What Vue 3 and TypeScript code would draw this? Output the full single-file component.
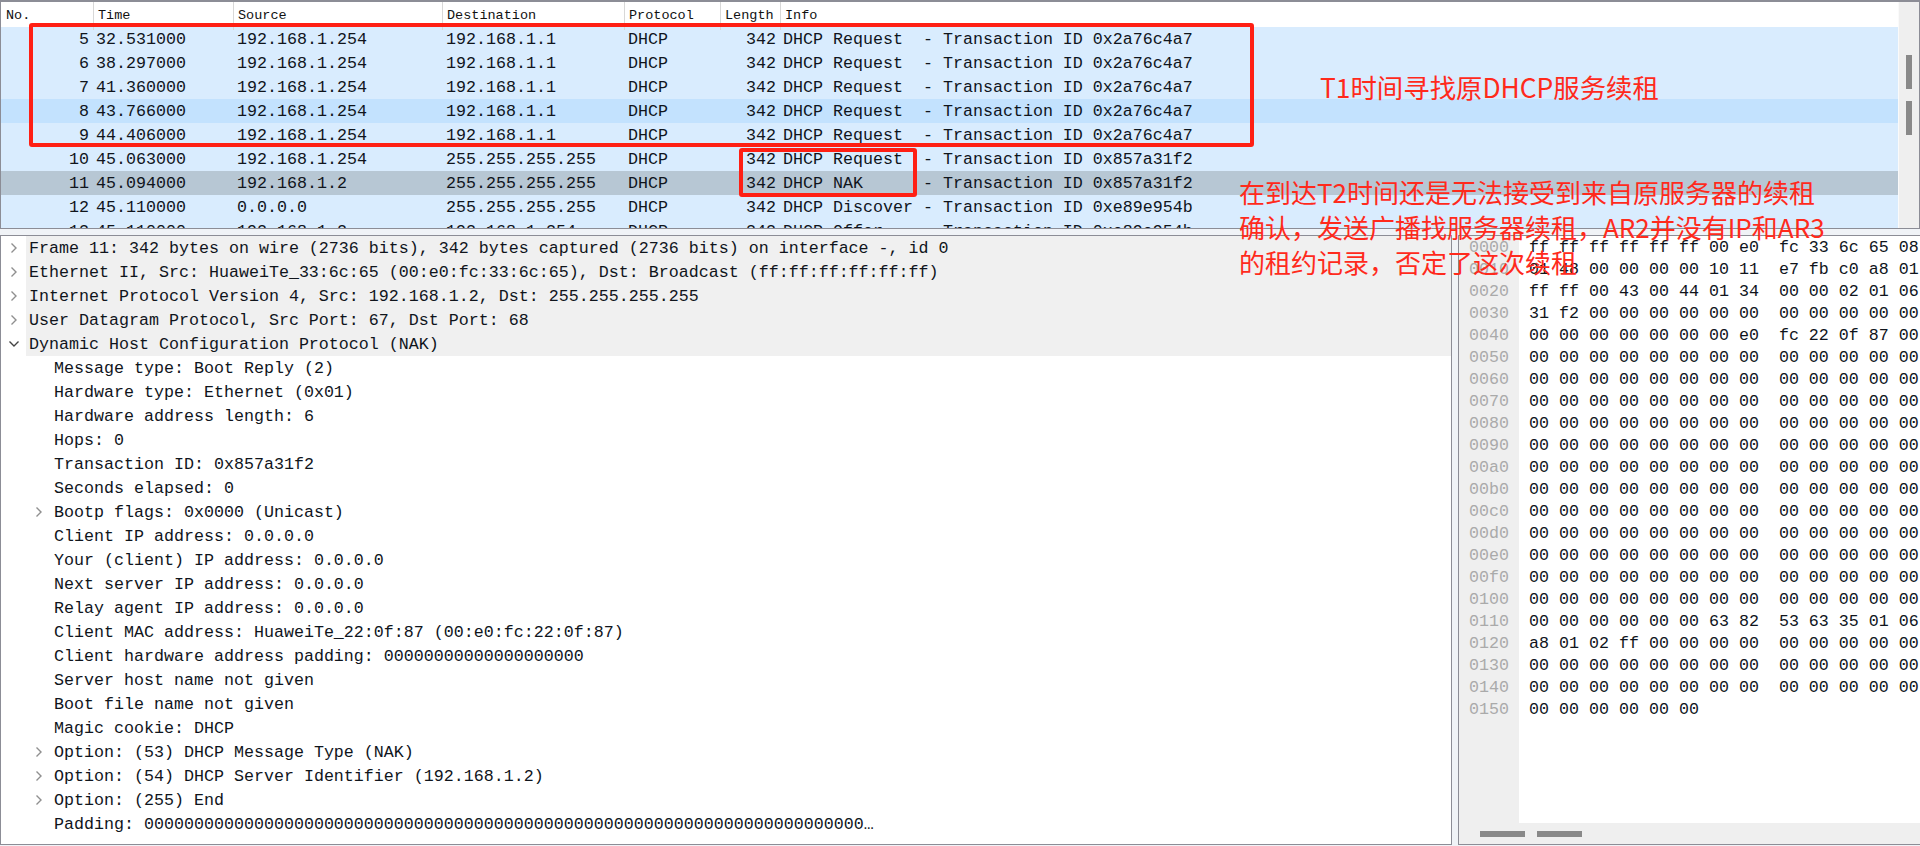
<script setup lang="ts">
interface Packet { no: number; time: string; src: string; dst: string; info: string; tone?: string }
interface Detail { text: string; level: number; arrow?: 'right' | 'down'; hl?: boolean }

const heads = ['No.', 'Time', 'Source', 'Destination', 'Protocol', 'Length', 'Info']
const a = '192.168.1.254'
const b = '192.168.1.1'
const bc = '255.255.255.255'
const packets: Packet[] = [
  { no: 5, time: '32.531000', src: a, dst: b, info: 'DHCP Request  - Transaction ID 0x2a76c4a7' },
  { no: 6, time: '38.297000', src: a, dst: b, info: 'DHCP Request  - Transaction ID 0x2a76c4a7' },
  { no: 7, time: '41.360000', src: a, dst: b, info: 'DHCP Request  - Transaction ID 0x2a76c4a7' },
  { no: 8, time: '43.766000', src: a, dst: b, info: 'DHCP Request  - Transaction ID 0x2a76c4a7', tone: 'related' },
  { no: 9, time: '44.406000', src: a, dst: b, info: 'DHCP Request  - Transaction ID 0x2a76c4a7' },
  { no: 10, time: '45.063000', src: a, dst: bc, info: 'DHCP Request  - Transaction ID 0x857a31f2' },
  { no: 11, time: '45.094000', src: '192.168.1.2', dst: bc, info: 'DHCP NAK      - Transaction ID 0x857a31f2', tone: 'selected' },
  { no: 12, time: '45.110000', src: '0.0.0.0', dst: bc, info: 'DHCP Discover - Transaction ID 0xe89e954b' },
  { no: 13, time: '45.110000', src: '192.168.1.2', dst: a, info: 'DHCP Offer    - Transaction ID 0xe89e954b' },
]
const details: Detail[] = [
  { text: 'Frame 11: 342 bytes on wire (2736 bits), 342 bytes captured (2736 bits) on interface -, id 0', level: 0, arrow: 'right', hl: true },
  { text: 'Ethernet II, Src: HuaweiTe_33:6c:65 (00:e0:fc:33:6c:65), Dst: Broadcast (ff:ff:ff:ff:ff:ff)', level: 0, arrow: 'right', hl: true },
  { text: 'Internet Protocol Version 4, Src: 192.168.1.2, Dst: 255.255.255.255', level: 0, arrow: 'right', hl: true },
  { text: 'User Datagram Protocol, Src Port: 67, Dst Port: 68', level: 0, arrow: 'right', hl: true },
  { text: 'Dynamic Host Configuration Protocol (NAK)', level: 0, arrow: 'down', hl: true },
  { text: 'Message type: Boot Reply (2)', level: 1 },
  { text: 'Hardware type: Ethernet (0x01)', level: 1 },
  { text: 'Hardware address length: 6', level: 1 },
  { text: 'Hops: 0', level: 1 },
  { text: 'Transaction ID: 0x857a31f2', level: 1 },
  { text: 'Seconds elapsed: 0', level: 1 },
  { text: 'Bootp flags: 0x0000 (Unicast)', level: 1, arrow: 'right' },
  { text: 'Client IP address: 0.0.0.0', level: 1 },
  { text: 'Your (client) IP address: 0.0.0.0', level: 1 },
  { text: 'Next server IP address: 0.0.0.0', level: 1 },
  { text: 'Relay agent IP address: 0.0.0.0', level: 1 },
  { text: 'Client MAC address: HuaweiTe_22:0f:87 (00:e0:fc:22:0f:87)', level: 1 },
  { text: 'Client hardware address padding: 00000000000000000000', level: 1 },
  { text: 'Server host name not given', level: 1 },
  { text: 'Boot file name not given', level: 1 },
  { text: 'Magic cookie: DHCP', level: 1 },
  { text: 'Option: (53) DHCP Message Type (NAK)', level: 1, arrow: 'right' },
  { text: 'Option: (54) DHCP Server Identifier (192.168.1.2)', level: 1, arrow: 'right' },
  { text: 'Option: (255) End', level: 1, arrow: 'right' },
  { text: 'Padding: ' + '0'.repeat(72) + '…', level: 1 },
]
const zero = '00 00 00 00 00 00 00 00  00 00 00 00 00'
const special: Record<number, string> = {
  0x00: 'ff ff ff ff ff ff 00 e0  fc 33 6c 65 08',
  0x10: '01 48 00 00 00 00 10 11  e7 fb c0 a8 01',
  0x20: 'ff ff 00 43 00 44 01 34  00 00 02 01 06',
  0x30: '31 f2 00 00 00 00 00 00  00 00 00 00 00',
  0x40: '00 00 00 00 00 00 00 e0  fc 22 0f 87 00',
  0x110: '00 00 00 00 00 00 63 82  53 63 35 01 06',
  0x120: 'a8 01 02 ff 00 00 00 00  00 00 00 00 00',
  0x150: '00 00 00 00 00 00',
}
const hex = Array.from({ length: 22 }, (_, i) => {
  const off = i * 16
  return { off: off.toString(16).padStart(4, '0'), bytes: special[off] ?? zero }
})
</script>

<template>
  <div class="app">
    <section class="list">
      <div class="list-main">
        <div class="cols head">
          <div v-for="h in heads" :key="h" class="hcell">{{ h }}</div>
        </div>
        <div v-for="p in packets" :key="p.no" class="cols row" :class="p.tone">
          <div class="num">{{ p.no }}</div>
          <div class="c-time">{{ p.time }}</div>
          <div class="c-addr">{{ p.src }}</div>
          <div class="c-addr">{{ p.dst }}</div>
          <div class="c-addr">DHCP</div>
          <div class="num">342</div>
          <div class="c-time">{{ p.info }}</div>
        </div>
      </div>
      <div class="vbar"><i></i><i></i></div>
    </section>

    <div class="lower">
      <section class="details">
        <div v-for="d in details" :key="d.text" class="drow" :class="{ nested: d.level === 1 }">
          <span class="arrow">
            <svg v-if="d.arrow === 'right'" width="8" height="12" viewBox="0 0 8 12">
              <path d="M1.5 1.5 6 6 1.5 10.500" fill="none" stroke="#8f8f8f" stroke-width="1.400" />
            </svg>
            <svg v-else-if="d.arrow === 'down'" width="12" height="8" viewBox="0 0 12 8">
              <path d="M1.500 1.500 6 6 10.500 1.500" fill="none" stroke="#444" stroke-width="1.400" />
            </svg>
          </span>
          <span class="dtext" :class="{ hl: d.hl }">{{ d.text }}</span>
        </div>
      </section>
      <section class="hex">
        <div class="hex-body">
          <div class="gutter">
            <div v-for="l in hex" :key="l.off" class="hline">{{ l.off }}</div>
          </div>
          <div class="bytes">
            <div v-for="l in hex" :key="l.off" class="hline">{{ l.bytes }}</div>
          </div>
        </div>
        <div class="hbar"><i></i><i></i></div>
      </section>
    </div>

    <div class="mark mark-a"></div>
    <div class="mark mark-b"></div>
    <div class="note note-a">T1时间寻找原DHCP服务续租</div>
    <div class="note note-b">
      <div>在到达T2时间还是无法接受到来自原服务器的续租</div>
      <div>确认，发送广播找服务器续租，AR2并没有IP和AR3</div>
      <div>的租约记录，否定了这次续租</div>
    </div>
  </div>
</template>

<style>
html, body { margin: 0; padding: 0; overflow: hidden; }
</style>

<style scoped>
.app {
  position: relative;
  width: 1920px;
  height: 846px;
  box-sizing: border-box;
  display: flex;
  flex-direction: column;
  background: #f0f3f7;
  overflow: hidden;
  font-family: "Liberation Mono", monospace;
  font-size: 16.67px;
  color: #10151c;
  font-variant-numeric: slashed-zero;
}
.list {
  flex: none;
  height: 229px;
  box-sizing: border-box;
  border: 1px solid #8c8d96;
  border-top-width: 2px;
  display: flex;
  background: #fff;
}
.list-main { flex: 1; min-width: 0; overflow: hidden; }
.cols {
  display: grid;
  grid-template-columns: 92px 140px 209px 182px 96px 60px 1fr;
}
.head { height: 25px; font-size: 13.500px; background: #fff; }
.hcell {
  border-left: 1px solid #d8d8d8;
  padding-left: 4px;
  line-height: 28px;
  color: #111;
}
.hcell:first-child { border-left: 0; padding-left: 5px; }
.row { height: 24px; line-height: 26px; background: #d9ecfe; white-space: pre; }
.row.related { background: #c3e2fe; }
.row.selected { background: #b7c7d4; }
.num { text-align: right; padding-right: 4px; }
.c-time { padding-left: 3px; }
.c-addr { padding-left: 4px; }
.vbar {
  flex: none;
  width: 21px;
  background: #efefef;
  border-left: 1px solid #fafafa;
  box-sizing: border-box;
  padding: 53px 0 0 7px;
  display: flex;
  flex-direction: column;
  gap: 12px;
}
.vbar i { display: block; width: 6px; height: 34px; background: #898989; }
.lower {
  flex: none;
  margin-top: 6px;
  height: 610px;
  display: flex;
  gap: 6px;
}
.details {
  flex: none;
  width: 1452px;
  box-sizing: border-box;
  border: 1px solid #8c8d96;
  background: #fff;
}
.drow { height: 24px; line-height: 26px; display: flex; white-space: pre; }
.drow.nested { padding-left: 25px; }
.arrow {
  flex: none;
  width: 25px;
  display: flex;
  align-items: center;
  justify-content: center;
  padding-left: 1px;
  box-sizing: border-box;
}
.dtext { flex: 1; padding-left: 3px; }
.dtext.hl { background: #f0f0f0; }
.hex {
  flex: 1;
  min-width: 0;
  box-sizing: border-box;
  border: 1px solid #8c8d96;
  border-right: 0;
  background: #fff;
  display: flex;
  flex-direction: column;
}
.hex-body { flex: 1; min-height: 0; display: flex; overflow: hidden; }
.gutter { flex: none; width: 60px; box-sizing: border-box; padding-left: 10px; background: #efefef; color: #aaa; }
.bytes { flex: 1; padding-left: 10px; white-space: pre; }
.hline { height: 22px; line-height: 24px; }
.hbar {
  flex: none;
  height: 21px;
  background: #efefef;
  box-sizing: border-box;
  padding: 8px 0 0 21px;
  display: flex;
  gap: 12px;
}
.hbar i { display: block; width: 45px; height: 6px; background: #898989; }
.mark {
  position: absolute;
  box-sizing: border-box;
  border: 4px solid #ff1f14;
  border-radius: 3px;
}
.mark-a { left: 29px; top: 23px; width: 1225px; height: 124px; }
.mark-b { left: 739px; top: 148px; width: 178px; height: 49px; }
.note {
  position: absolute;
  font-family: "Noto Sans CJK SC", sans-serif;
  font-size: 26.400px;
  line-height: 35px;
  color: #ff2a1c;
  white-space: nowrap;
}
.note-a { left: 1320px; top: 69px; }
.note-b { left: 1239px; top: 174px; font-size: 26px; }
</style>
